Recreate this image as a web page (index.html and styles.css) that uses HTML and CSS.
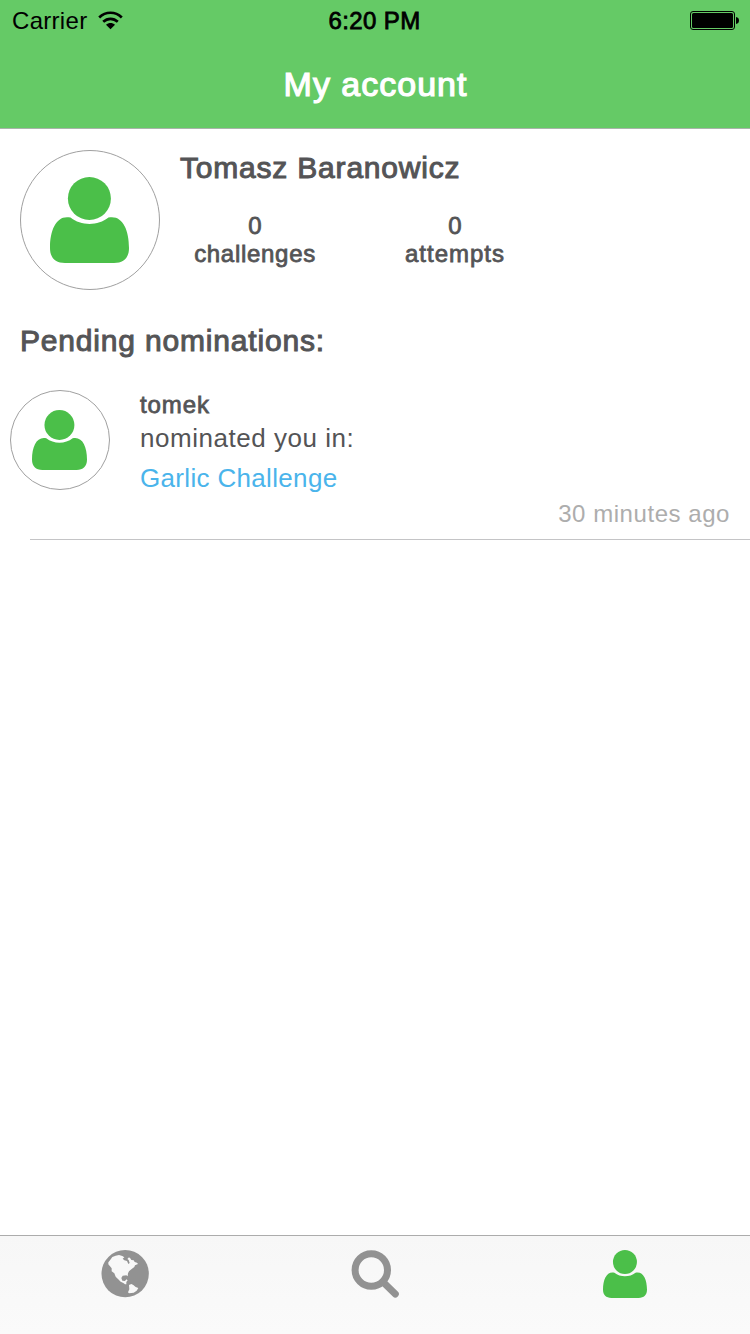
FILE: index.html
```html
<!DOCTYPE html>
<html lang="en">
<head>
<meta charset="utf-8">
<title>My account</title>
<link rel="stylesheet" href="styles.css">
</head>
<body>
<svg class="symbols" aria-hidden="true">
  <symbol id="person" viewBox="0 0 79 86">
    <circle cx="39.4" cy="21.5" r="21.5"/>
    <path d="M20.5 40.6C31 49.2 48 49.2 58.4 40.6C72 37.5 79 52 79 71C79 81 73.500 86 64 86H15C5.500 86 0 81 0 71C0 52 7 37.500 20.500 40.600Z"/>
  </symbol>
</svg>
<div class="screen">
  <header class="header">
    <div class="status">
      <div class="carrier"><span>Carrier</span>
        <svg class="wifi" viewBox="0 0 25 19"><path d="M1.200 6.400C7.700.200 17.300.200 23.800 6.400M5.200 10.800C9.500 6.800 15.500 6.800 19.800 10.800"/><path class="wifi-dot" d="M8 13.800C10.600 11.500 14.400 11.500 17 13.800L12.500 18.200Z"/></svg>
      </div>
      <div class="clock medium">6:20 PM</div>
      <div class="power"><svg class="battery" viewBox="0 0 50 20"><rect class="battery-frame" x=".5" y=".5" width="44" height="18" rx="2.500"/><rect x="2" y="2" width="41" height="15" rx="1.500"/><path d="M46 6C48 6.300 49 7.500 49 9.500S48 12.700 46 13Z"/></svg></div>
    </div>
    <h1 class="title medium">My account</h1>
  </header>
  <main class="content">
    <section class="profile">
      <div class="avatar avatar-large"><svg class="person"><use href="#person"/></svg></div>
      <div class="profile-info">
        <h2 class="name medium">Tomasz Baranowicz</h2>
        <div class="stats medium">
          <div class="stat"><span>0</span><span class="challenges">challenges</span></div>
          <div class="stat"><span>0</span><span class="attempts">attempts</span></div>
        </div>
      </div>
    </section>
    <h2 class="section-title medium">Pending nominations:</h2>
    <article class="nomination">
      <div class="avatar avatar-small"><svg class="person"><use href="#person"/></svg></div>
      <div class="details">
        <div class="user medium">tomek</div>
        <div class="action">nominated you in:</div>
        <a class="challenge">Garlic Challenge</a>
        <div class="time">30 minutes ago</div>
      </div>
    </article>
    <div class="divider"></div>
  </main>
  <nav class="tabs">
    <div class="tab"><svg class="globe" viewBox="6 6 144 144"><circle cx="78.500" cy="77" r="71"/><path class="land" d="M28 43L33 37L40 27L50 23L60 21L70 24L76 28L71 32L76 37L84 39L88 48L92 45L89 36L85 33L90 28L95 32L97 36L104 37L107 42L114 44L117 48L108 52L106 57L97 64L90 70L87 76L86 85L82 82L71 83L67 90L70 98L78 99L82 94L86 97L82 102L82 109L78 109L73 105L65 101L57 93L50 86L46 76L38 70L38 61L33 55L28 49ZM90 111L97 108L103 111L110 117L118 120L113 128L104 134L90 136L87 133L91 124Z"/></svg></div>
    <div class="tab"><svg class="search" viewBox="0 0 48 48"><circle cx="20.300" cy="20" r="16.200"/><path class="handle" d="M32 32L44.300 44"/></svg></div>
    <div class="tab"><svg class="person active"><use href="#person"/></svg></div>
  </nav>
</div>
</body>
</html>
```
FILE: styles.css
```css
* { box-sizing: border-box; }
body { margin: 0; background: #fff; color: #545456; font-family: "Liberation Sans", Arial, sans-serif; }
h1, h2 { margin: 0; font-weight: 400; }
svg { display: block; }
.symbols { display: none; }
.medium { -webkit-text-stroke: 0.8px currentColor; }
.screen { display: flex; flex-direction: column; width: 750px; height: 1334px; }

.header { height: 129px; background: #65ca66; border-bottom: 1px solid #a9b4aa; }
.status { display: grid; grid-template-columns: 1fr auto 1fr; align-items: center; height: 40px; padding: 0 10px 0 12px; color: #000; font-size: 24px; line-height: 41px; }
.carrier { display: flex; align-items: center; gap: 11px; letter-spacing: 0.3px; }
.wifi { width: 25px; height: 19px; fill: none; stroke: #000; stroke-width: 2.700; }
.wifi-dot { fill: #000; stroke: none; }
.clock { margin-right: 3px; letter-spacing: 0.4px; }
.power { justify-self: end; }
.battery { width: 50px; height: 20px; }
.battery-frame { fill: none; stroke: #000; }
.title { padding-left: 1px; color: #fff; font-size: 34px; line-height: 88px; letter-spacing: 1px; text-align: center; -webkit-text-stroke-width: 1.2px; }

.content { flex: 1; padding-top: 21px; }
.profile { display: flex; gap: 20px; height: 140px; padding-left: 20px; }
.avatar { display: flex; flex: none; justify-content: center; padding-right: 2px; border: 1px solid #a0a0a0; border-radius: 50%; }
.person { fill: #4bbf49; }
.avatar-large { width: 140px; height: 140px; padding-top: 26px; }
.avatar-large .person { width: 79px; height: 86px; }
.name { font-size: 30px; line-height: 36px; letter-spacing: 0.8px; -webkit-text-stroke-width: 1px; }
.stats { display: flex; gap: 50px; margin-top: 26px; font-size: 24px; line-height: 28px; }
.stat { display: flex; flex-direction: column; align-items: center; width: 150px; }
.challenges { letter-spacing: 0.7px; }
.attempts { letter-spacing: 1px; }
.section-title { margin: 33px 0 31px 20px; font-size: 30px; line-height: 36px; letter-spacing: 0.82px; -webkit-text-stroke-width: 1px; }

.nomination { display: flex; gap: 30px; height: 149px; padding: 0 20px 0 10px; }
.avatar-small { width: 100px; height: 100px; padding-top: 19px; }
.avatar-small .person { width: 55px; height: 60px; }
.details { display: flex; flex: 1; flex-direction: column; }
.user { font-size: 24px; line-height: 30px; letter-spacing: 0.9px; }
.action { font-size: 26px; line-height: 36px; letter-spacing: 0.53px; }
.challenge { color: #4ab4eb; font-size: 26px; line-height: 44px; letter-spacing: 0.33px; }
.time { align-self: flex-end; color: #adadad; font-size: 24px; line-height: 28px; letter-spacing: 0.55px; }
.divider { height: 1px; margin-left: 30px; background: #c4c4c6; }

.tabs { display: grid; grid-template-columns: repeat(3, 1fr); height: 99px; padding-top: 14px; background: linear-gradient(#f7f7f7, #fafafa); border-top: 1px solid #acacac; }
.tab { display: flex; justify-content: center; }
.globe { width: 48px; height: 48px; fill: #929292; }
.land { fill: #f8f8f8; }
.search { width: 48px; height: 48px; fill: none; stroke: #929292; stroke-width: 7; }
.handle { stroke-linecap: round; stroke-width: 7; }
.active { width: 44px; height: 48px; }
```
